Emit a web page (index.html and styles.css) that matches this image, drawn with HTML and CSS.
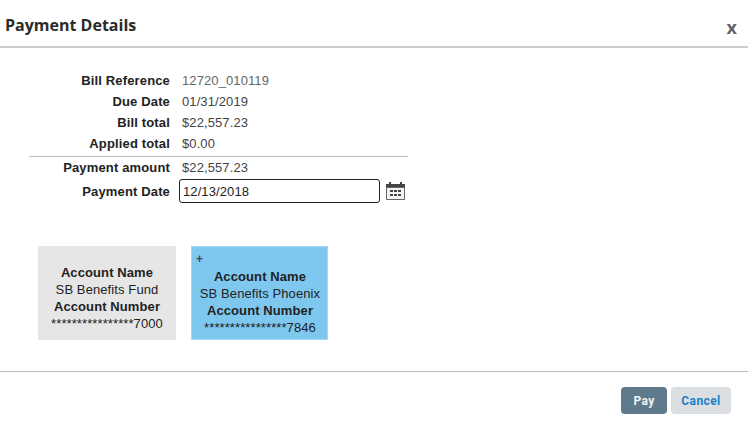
FILE: index.html
```html
<!DOCTYPE html>
<html lang="en">
<head>
<meta charset="utf-8">
<title>Payment Details</title>
<link rel="stylesheet" href="styles.css">
</head>
<body>
<div class="dialog">
  <header class="head">
    <h1 class="title">Payment Details</h1>
    <span class="close">x</span>
  </header>
  <main class="body">
    <section class="details">
      <div class="row"><span class="label">Bill Reference</span><span class="value muted">12720_010119</span></div>
      <div class="row"><span class="label">Due Date</span><span class="value">01/31/2019</span></div>
      <div class="row"><span class="label">Bill total</span><span class="value">$22,557.23</span></div>
      <div class="row"><span class="label">Applied total</span><span class="value">$0.00</span></div>
      <div class="row row-sep"><span class="label">Payment amount</span><span class="value">$22,557.23</span></div>
      <div class="row row-input">
        <span class="label">Payment Date</span>
        <input class="date" type="text" value="12/13/2018">
        <svg class="cal" width="19" height="18" viewBox="0 0 19 18" aria-hidden="true">
          <path fill="#444" d="M0 2h3V0h2v2h9V0h2v2h3v4H0z"/>
          <path fill="#f4f4f4" stroke="#666" d="M.5 5.5h18v12H.5z"/>
          <path fill="#444" d="M4 8h3v2H4zM8 8h3v2H8zM12 8h3v2h-3zM4 12h3v2H4zM8 12h3v2H8zM12 12h3v2h-3z"/>
        </svg>
      </div>
    </section>
    <section class="cards">
      <article class="card">
        <strong>Account Name</strong>
        <span>SB Benefits Fund</span>
        <strong>Account Number</strong>
        <span>****************7000</span>
      </article>
      <article class="card card-active">
        <span class="plus">+</span>
        <strong>Account Name</strong>
        <span>SB Benefits Phoenix</span>
        <strong>Account Number</strong>
        <span>****************7846</span>
      </article>
    </section>
  </main>
  <footer class="foot">
    <button class="btn btn-pay" type="button">Pay</button>
    <button class="btn btn-cancel" type="button">Cancel</button>
  </footer>
</div>
</body>
</html>
```
FILE: styles.css
```css
* { box-sizing: border-box; }
html, body { margin: 0; padding: 0; background: #fff; }
body { font-family: "Liberation Sans", Arial, sans-serif; font-size: 13px; letter-spacing: .1px; color: #222; }
.dialog { width: 748px; height: 440px; display: flex; flex-direction: column; }
.head { height: 48px; border-bottom: 2px solid #ccc; display: flex; justify-content: space-between; padding: 15px 11px 0 5px; }
.title { margin: 0; font-family: "Open Sans", sans-serif; font-size: 16px; font-weight: 700; line-height: 20px; letter-spacing: 0; color: #2b2b2b; }
.close { font-family: "Open Sans", sans-serif; font-weight: 700; font-size: 18px; line-height: 24px; color: #666; letter-spacing: 0; }
.body { height: 324px; padding: 22px 0 0 29px; border-bottom: 1px solid #bbb; }
.details { width: 379px; }
.row { display: flex; align-items: center; height: 21px; }
.label { flex: none; width: 141px; margin-right: 12px; text-align: right; font-weight: 700; letter-spacing: .15px; color: #222; }
.value { color: #444; }
.muted { color: #666; }
.row-sep { border-top: 1px solid #bbb; margin-top: 2px; height: 22px; }
.row-input { height: 24px; margin-top: 1px; }
.row-input .label { margin-right: 9px; }
.date { flex: none; width: 201px; height: 24px; margin: 0 6px 0 0; padding: 0 3px; border: 1px solid #222; border-radius: 3px; font: 13px "Liberation Sans", Arial, sans-serif; letter-spacing: .1px; color: #222; background: #fff; outline: none; }
.cal { flex: none; margin-top: -1px; }
.cards { display: flex; column-gap: 15px; margin: 43px 0 0 9px; }
.card { width: 138px; height: 94px; padding-top: 18px; background: #e6e6e6; display: flex; flex-direction: column; align-items: center; text-align: center; color: #222; line-height: 17px; position: relative; }
.card-active { width: 137px; background: #7ec8f0; border: 1px solid #a3d9f5; padding: 21px 0 0 1px; }
.plus { position: absolute; left: 4px; top: 6px; font-size: 12px; line-height: 12px; font-weight: 700; color: #445; }
.foot { display: flex; justify-content: flex-end; column-gap: 4px; padding: 15px 17px 0 0; }
.btn { height: 27px; border: 0; border-radius: 4px; font: 700 12px "Roboto", sans-serif; letter-spacing: .4px; padding: 0; }
.btn-pay { width: 46px; background: #5f7a8b; color: #f2f2f2; }
.btn-cancel { width: 60px; background: #dcdfe2; color: #1a80c8; }
```
